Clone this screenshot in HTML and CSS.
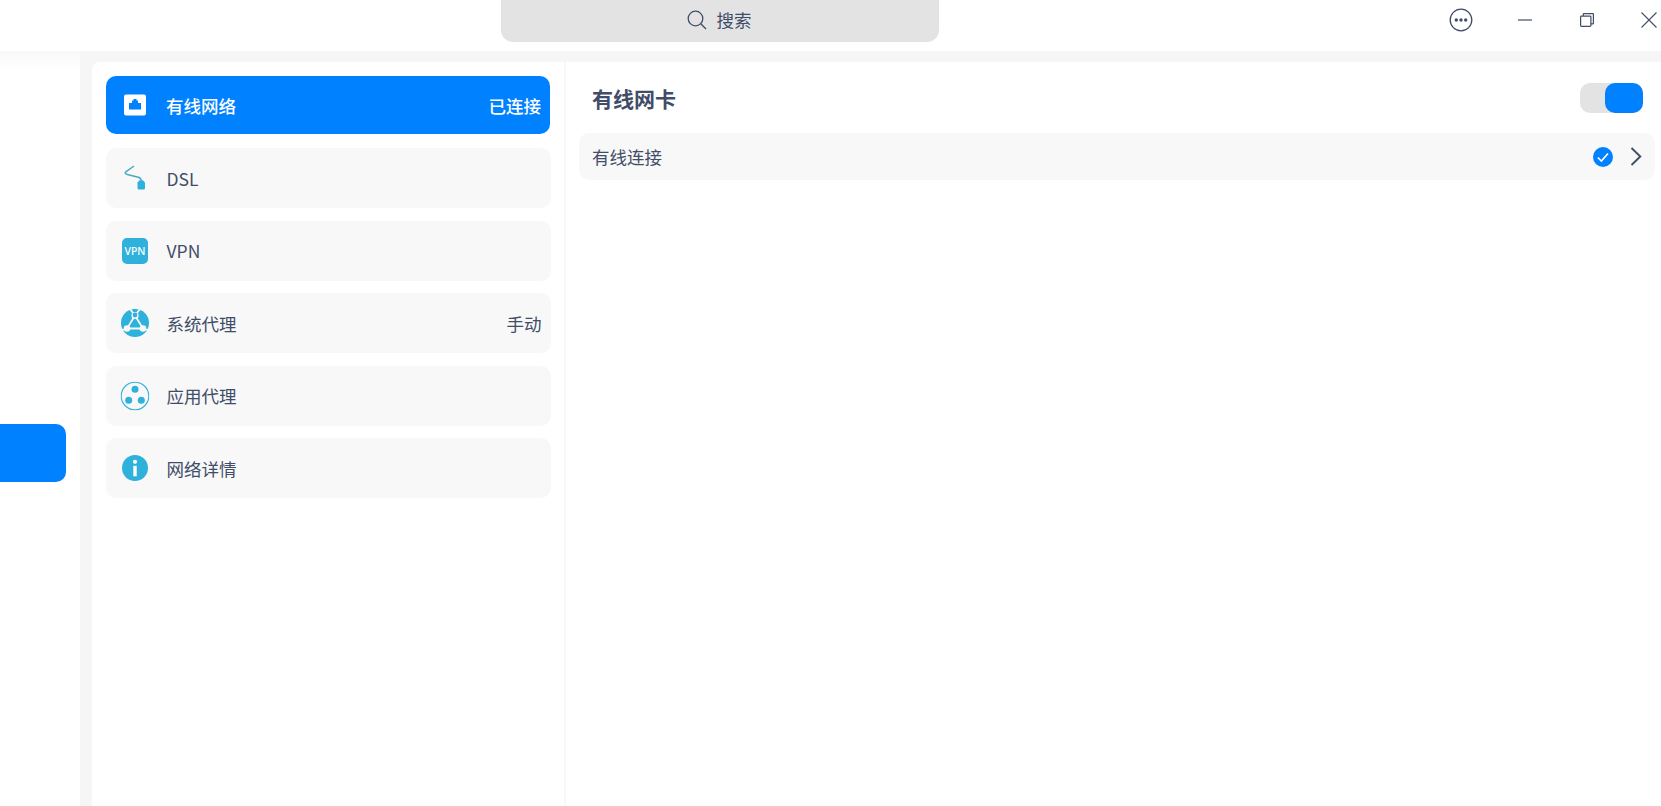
FILE: index.html
```html
<!DOCTYPE html>
<html lang="zh-CN">
<head>
<meta charset="utf-8">
<title>网络</title>
<link rel="stylesheet" href="styles.css">
</head>
<body>
<div class="app">
  <header class="titlebar">
    <div class="search">
      <svg class="search-icon" width="20" height="20" viewBox="0 0 20 20" fill="none" stroke="#414d68" stroke-width="1.3"><circle cx="8.5" cy="8.5" r="7.3"/><path d="M13.8 13.8 19 19"/></svg>
      <span>搜索</span>
    </div>
    <div class="win-controls">
      <svg class="ctl-menu" width="24" height="24" viewBox="0 0 24 24" fill="none"><circle cx="12" cy="12" r="10.8" stroke="#414d68" stroke-width="1.3"/><circle cx="7.3" cy="12" r="1.7" fill="#414d68"/><circle cx="12" cy="12" r="1.7" fill="#414d68"/><circle cx="16.7" cy="12" r="1.7" fill="#414d68"/></svg>
      <svg class="ctl-min" width="14" height="14" viewBox="0 0 14 14" fill="none" stroke="#414d68" stroke-width="1.2"><path d="M0 7h14"/></svg>
      <svg class="ctl-max" width="14" height="14" viewBox="0 0 14 14" fill="none" stroke="#414d68" stroke-width="1.2"><rect x=".6" y="3.1" width="10.3" height="10.3" rx=".8"/><path d="M3.3 3V1.200q0-.6.6-.6h8.900q.6 0 .6.6v9q0 .6-.6.6h-1.800"/></svg>
      <svg class="ctl-close" width="16" height="16" viewBox="0 0 16 16" fill="none" stroke="#414d68" stroke-width="1.1"><path d="M.5.5l15 15M15.500.5l-15 15"/></svg>
    </div>
  </header>
  <main class="main">
    <nav class="rail"><div class="rail-active"></div></nav>
    <div class="content">
      <div class="panel">
        <section class="list">
          <div class="item active">
            <svg class="icon" width="24" height="24" viewBox="0 0 24 24"><rect x="1" y="1.500" width="22" height="21" rx="2" fill="#fff"/><path d="M6 16.500v-6.500h3v-2.500h1.500v-1.500h3v1.500h1.500v2.500h3v6.500z" fill="#0081ff"/></svg>
            <span class="label">有线网络</span><span class="status">已连接</span>
          </div>
          <div class="item">
            <svg class="icon" width="24" height="26" viewBox="0 0 24 26" fill="none"><path d="M11 1 2.800 6.800c-1.300 1.200-.3 2.200 1.500 2.700l11 2.800c2 .5 2.800 1.500 2.900 3.500" stroke="#4aa8c4" stroke-width="1.500"/><path d="M14.500 17.500l2-2.200h3.500l2 2.200v5.500q0 1.500-1.500 1.500h-4.500q-1.500 0-1.500-1.500z" fill="#2fb1dc"/></svg>
            <span class="label">DSL</span>
          </div>
          <div class="item">
            <svg class="icon" width="26" height="26" viewBox="0 0 26 26"><rect width="26" height="26" rx="5" x="0" y="0" fill="#2eb2dc"/><text class="vpn-text" x="13" y="16.800" text-anchor="middle">VPN</text></svg>
            <span class="label">VPN</span>
          </div>
          <div class="item">
            <svg class="icon" width="28" height="28" viewBox="0 0 28 28"><circle cx="14" cy="14" r="14" fill="#2eb2dc"/><g stroke="#f8f8f8" stroke-width="1.800" fill="none"><path d="M14 6.500 6 19.500h16z"/><path d="M9 0l5 6.500L19 0M0 21.500l6-2M28 21.500l-6-2"/></g><circle cx="14" cy="6.500" r="3.600" fill="#f8f8f8"/><circle cx="14" cy="6" r="2.400" fill="#2eb2dc"/><circle cx="6" cy="19.500" r="3.300" fill="#f8f8f8"/><circle cx="22" cy="19.500" r="3.300" fill="#f8f8f8"/></svg>
            <span class="label">系统代理</span><span class="status">手动</span>
          </div>
          <div class="item">
            <svg class="icon" width="29" height="29" viewBox="0 0 29 29"><circle cx="14.500" cy="14.500" r="13.800" fill="none" stroke="#2eb2dc" stroke-width="1.100"/><circle cx="14.500" cy="7.800" r="3.500" fill="#2eb2dc"/><circle cx="8.200" cy="18.800" r="3.500" fill="#2eb2dc"/><circle cx="20.800" cy="18.800" r="3.500" fill="#2eb2dc"/></svg>
            <span class="label">应用代理</span>
          </div>
          <div class="item">
            <svg class="icon" width="26" height="26" viewBox="0 0 26 26"><circle cx="13" cy="13" r="13" fill="#2eb2dc"/><circle cx="13" cy="6.800" r="2.100" fill="#fff"/><path d="M11.300 10.800h3.400v10.500h-3.400z" fill="#fff"/></svg>
            <span class="label">网络详情</span>
          </div>
        </section>
        <section class="detail">
          <div class="detail-head">
            <h1 class="title">有线网卡</h1>
            <div class="toggle"><div class="thumb"></div></div>
          </div>
          <div class="conn">
            <span class="label">有线连接</span>
            <svg class="check" width="20" height="20" viewBox="0 0 20 20"><circle cx="10" cy="10" r="10" fill="#0081ff"/><path d="M4.800 10.500l3.600 3.500 6.600-7.500" fill="none" stroke="#fff" stroke-width="1.700"/></svg>
            <svg class="chev" width="12" height="19" viewBox="0 0 12 19" fill="none" stroke="#414d68" stroke-width="1.900"><path d="M1.500 1l8.800 8.500-8.800 8.500"/></svg>
          </div>
        </section>
      </div>
    </div>
  </main>
</div>
</body>
</html>
```
FILE: styles.css
```css
* { box-sizing: border-box; }
html, body { margin: 0; height: 100%; overflow: hidden; background: #fff; }
body { font-family: "Noto Sans CJK SC", "Noto Sans", sans-serif; font-size: 17.5px; color: #414d68; }
.app { height: 806px; display: flex; flex-direction: column; }

.titlebar { height: 51px; flex: none; display: flex; background: #fff; position: relative; }
.search { width: 438px; height: 42px; margin-left: 501px; background: #e3e3e3; border-radius: 0 0 12px 12px; display: flex; align-items: center; justify-content: center; gap: 10px; padding: 0 2px 2px 0; }
.search span { line-height: 1; }
.win-controls { flex: 1; display: flex; align-items: center; height: 39px; padding-left: 510px; }
.win-controls svg { flex: none; display: block; }
.ctl-min { margin-left: 45px; }
.ctl-max { margin-left: 48px; }
.ctl-close { margin-left: 47px; }

.main { flex: 1; display: flex; min-height: 0; }
.rail { width: 80px; flex: none; padding-top: 373px; background: linear-gradient(#f8f8f8, #fff 20px); }
.rail-active { width: 66px; height: 58px; background: #0081ff; border-radius: 0 10px 10px 0; }
.content { flex: 1; min-width: 0; background: #f6f6f7; padding: 11px 0 0 12px; display: flex; }
.panel { flex: 1; min-width: 0; display: flex; background: #fff; border-radius: 8px 0 0 0; }

.list { width: 474px; flex: none; padding: 14px 13.500px 0 13.500px; border-right: 2px solid #f8f8f8; display: flex; flex-direction: column; gap: 12.500px; }
.item { height: 60px; padding: 0 9px 0 15px; background: #f8f8f8; border-radius: 10px; display: flex; align-items: center; flex: none; position: relative; }
.item .icon { position: absolute; left: 29.500px; top: 50%; transform: translate(-50%, -50%); }
.item .label { margin-left: 46px; }
.item .status { margin-left: auto; }
.item.active { height: 58px; margin: 0 .5px 1.500px; background: #0081ff; color: #fff; font-weight: 500; }
.item.active .icon { left: 29px; }
.item.active .label { margin-left: 45px; }
.vpn-text { font-size: 10.500px; font-weight: 500; fill: #fff; font-family: "Noto Sans", sans-serif; }

.detail { flex: 1; min-width: 0; padding: 0 6px 0 13px; }
.detail-head { height: 71px; display: flex; align-items: center; justify-content: space-between; padding: 0 12px 0 13px; }
.title { margin: 0 0 -2px; font-size: 21px; font-weight: 700; line-height: 1; }
.toggle { width: 63px; height: 30px; background: #e3e3e3; border-radius: 10px; display: flex; justify-content: flex-end; }
.thumb { width: 38px; height: 30px; background: #0081ff; border-radius: 10px; }
.conn { height: 47px; background: #f8f8f8; border-radius: 10px; display: flex; align-items: center; padding: 0 13px 0 14px; }
.conn .label { flex: 1; margin-left: -1px; }
.check { flex: none; margin-right: 17px; }
.chev { flex: none; }
```
